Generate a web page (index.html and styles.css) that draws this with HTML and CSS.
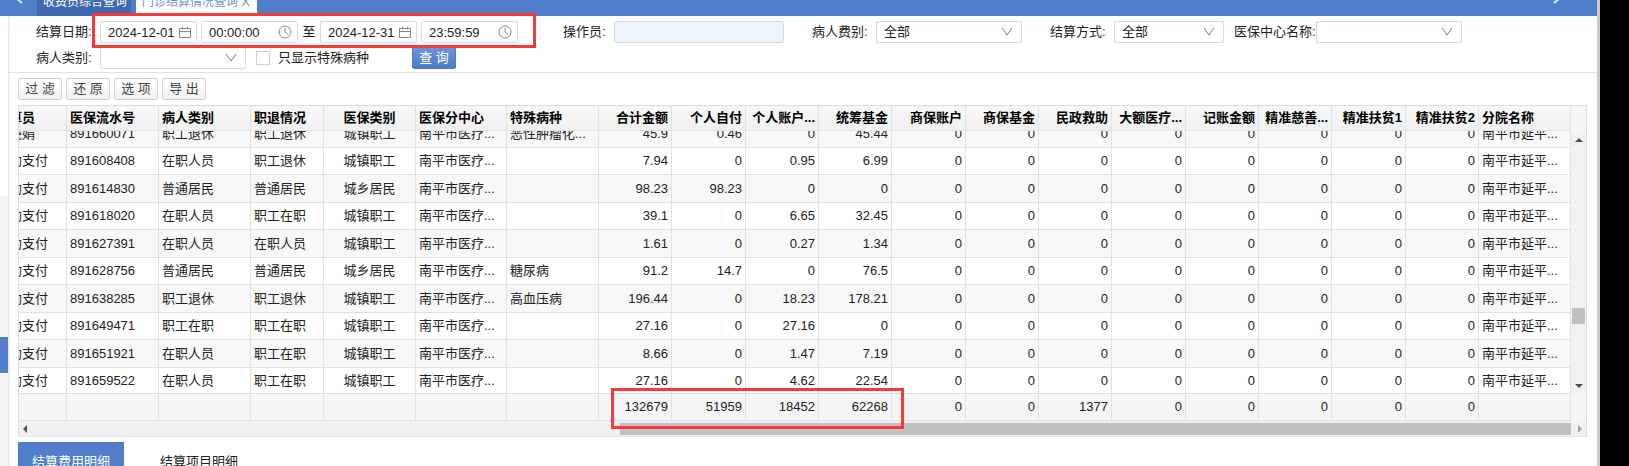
FILE: index.html
```html
<!DOCTYPE html>
<html lang="zh-CN">
<head>
    <meta charset="UTF-8">
    <title>门诊结算情况查询</title>
    <link rel="stylesheet" href="styles.css">
</head>
<body>
<svg class="defs">
    <symbol id="icon-date" viewBox="0 0 12 12"><path d="M.5 2.5h11v9H.5zM.5 5.5h11M3.5.5v3M8.5.5v3"/></symbol>
    <symbol id="icon-time" viewBox="0 0 14 14"><circle cx="7" cy="7" r="6"/><path d="M7 3v4l3 2.500"/></symbol>
    <symbol id="icon-down" viewBox="0 0 12 10"><path d="M1 1l5 7 5-7"/></symbol>
</svg>

<div class="window">
    <aside class="side"><button class="side-toggle" aria-label="展开菜单"></button></aside>

    <div class="page">
        <nav class="tabbar">
            <button class="tab-arrow" aria-label="向左"><svg viewBox="0 0 8 12"><path d="M7 1L1 6l6 5"/></svg></button>
            <a class="tab" href="#">收费员综合查询</a>
            <a class="tab active" href="#">门诊结算情况查询 <span class="close">X</span></a>
            <button class="tab-arrow tab-next" aria-label="向右"><svg viewBox="0 0 8 12"><path d="M1 1l6 5-6 5"/></svg></button>
        </nav>

        <main class="main">
            <form class="search">
                <div class="field">
                    <label for="beginDate">结算日期:</label>
                    <div class="range">
                        <span class="box"><input id="beginDate" type="text" value="2024-12-01"><svg class="icon icon-date"><use href="#icon-date"/></svg></span>
                        <span class="box"><input type="text" value="00:00:00" aria-label="开始时间"><svg class="icon"><use href="#icon-time"/></svg></span>
                        <span class="to">至</span>
                        <span class="box"><input type="text" value="2024-12-31" aria-label="结束日期"><svg class="icon icon-date"><use href="#icon-date"/></svg></span>
                        <span class="box"><input type="text" value="23:59:59" aria-label="结束时间"><svg class="icon"><use href="#icon-time"/></svg></span>
                        <div class="mark mark-date"></div>
                    </div>
                </div>
                <div class="field field-short">
                    <label for="operator">操作员:</label>
                    <span class="box box-operator"><input id="operator" type="text"></span>
                </div>
                <div class="field">
                    <label for="feeType">病人费别:</label>
                    <span class="box box-wide"><select id="feeType"><option>全部</option></select><svg class="icon icon-down"><use href="#icon-down"/></svg></span>
                </div>
                <div class="field">
                    <label for="payType">结算方式:</label>
                    <span class="box box-pay"><select id="payType"><option>全部</option></select><svg class="icon icon-down"><use href="#icon-down"/></svg></span>
                </div>
                <div class="field field-long">
                    <label for="center">医保中心名称:</label>
                    <span class="box box-wide"><select id="center"><option></option></select><svg class="icon icon-down"><use href="#icon-down"/></svg></span>
                </div>
                <div class="field field-row">
                    <label for="patientType">病人类别:</label>
                    <span class="box box-wide"><select id="patientType"><option></option></select><svg class="icon icon-down"><use href="#icon-down"/></svg></span>
                    <label class="check"><input type="checkbox">只显示特殊病种</label>
                    <button class="btn-query" type="button">查 询</button>
                </div>
            </form>

            <div class="toolbar">
                <button>过 滤</button>
                <button>还 原</button>
                <button>选 项</button>
                <button>导 出</button>
            </div>

            <div class="grid">
                <div class="grid-view" id="gridView">
                    <table>
                        <colgroup id="cols"></colgroup>
                        <thead><tr id="gridHead"></tr></thead>
                        <tbody id="gridBody"></tbody>
                        <tfoot><tr id="gridFoot"></tr></tfoot>
                    </table>
                </div>
                <div class="vscroll">
                    <div class="vtrack">
                        <i class="arrow up"></i>
                        <i class="vthumb"></i>
                        <i class="arrow down"></i>
                    </div>
                </div>
                <div class="hscroll">
                    <i class="arrow left"></i>
                    <i class="hthumb"></i>
                    <i class="arrow right"></i>
                </div>
                <div class="mark mark-total"></div>
            </div>

            <nav class="detail-tabs">
                <a class="active" href="#">结算费用明细</a>
                <a href="#">结算项目明细</a>
            </nav>
        </main>
    </div>
</div>

<script>
    // 列: 标题, 宽度, 对齐
    const columns = [
        ['结算员', 74, 'l'], ['医保流水号', 92, 'l'], ['病人类别', 92, 'l'], ['职退情况', 73, 'l'],
        ['医保类别', 92, 'c'], ['医保分中心', 91, 'l'], ['特殊病种', 92, 'l'], ['合计金额', 73, 'r'],
        ['个人自付', 74, 'r'], ['个人账户...', 73, 'r'], ['统筹基金', 73, 'r'], ['商保账户', 74, 'r'],
        ['商保基金', 73, 'r'], ['民政救助', 73, 'r'], ['大额医疗...', 74, 'r'], ['记账金额', 73, 'r'],
        ['精准慈善...', 73, 'r'], ['精准扶贫1', 74, 'r'], ['精准扶贫2', 73, 'r'], ['分院名称', 0, 'l']
    ];

    // 流水号, 病人类别, 职退情况, 医保类别, 特殊病种, 合计, 自付, 账户, 统筹
    const records = [
        ['891660071', '职工退休', '职工退休', '城镇职工', '恶性肿瘤化...', 45.9, 0.46, 0, 45.44],
        ['891608408', '在职人员', '职工退休', '城镇职工', '', 7.94, 0, 0.95, 6.99],
        ['891614830', '普通居民', '普通居民', '城乡居民', '', 98.23, 98.23, 0, 0],
        ['891618020', '在职人员', '职工在职', '城镇职工', '', 39.1, 0, 6.65, 32.45],
        ['891627391', '在职人员', '在职人员', '城镇职工', '', 1.61, 0, 0.27, 1.34],
        ['891628756', '普通居民', '普通居民', '城乡居民', '糖尿病', 91.2, 14.7, 0, 76.5],
        ['891638285', '职工退休', '职工退休', '城镇职工', '高血压病', 196.44, 0, 18.23, 178.21],
        ['891649471', '职工在职', '职工在职', '城镇职工', '', 27.16, 0, 27.16, 0],
        ['891651921', '在职人员', '职工在职', '城镇职工', '', 8.66, 0, 1.47, 7.19],
        ['891659522', '在职人员', '职工在职', '城镇职工', '', 27.16, 0, 4.62, 22.54]
    ];
    const totals = ['', '', '', '', '', '', '', 132679, 51959, 18452, 62268, 0, 0, 1377, 0, 0, 0, 0, 0, ''];

    function cells(values, tag) {
        return values.map((v, i) => `<${tag} class="${columns[i][2]}">${v}</${tag}>`).join('');
    }

    function toRow(r, i) {
        const name = i === 0 ? '陈晓娟' : '自助支付';
        return [name, r[0], r[1], r[2], r[3], '南平市医疗...', r[4], r[5], r[6], r[7], r[8],
            0, 0, 0, 0, 0, 0, 0, 0, '南平市延平...'];
    }

    document.getElementById('cols').innerHTML =
        columns.map(c => c[1] ? `<col style="width:${c[1]}px">` : '<col>').join('');
    document.getElementById('gridHead').innerHTML = cells(columns.map(c => c[0]), 'th');
    document.getElementById('gridBody').innerHTML =
        records.map((r, i) => `<tr>${cells(toRow(r, i), 'td')}</tr>`).join('');
    document.getElementById('gridFoot').innerHTML = cells(totals, 'td');

    const view = document.getElementById('gridView');
    view.scrollTop = 11;
    view.scrollLeft = 26;
</script>
</body>
</html>
```

FILE: styles.css
```css
* {
    box-sizing: border-box;
}
body {
    margin: 0;
    background: #000;
    color: #222;
    font: 13px/18px "Liberation Sans", Arial, "Noto Sans CJK SC", sans-serif;
    overflow: hidden;
}
button, input, select {
    font: inherit;
    color: inherit;
    margin: 0;
}
a {
    color: inherit;
    text-decoration: none;
}
.defs {
    display: none;
}
.window {
    display: grid;
    grid-template-columns: 8px 1fr;
    height: 100vh;
    margin-right: 29px;
    border-right: 3px solid #c8cacb;
    background: #fff;
}

/* 左侧收起的菜单 */
.side {
    background: linear-gradient(#507ecb 16px, #fff 16px, #fff 196px, #f4f4f4 196px);
    padding-top: 337px;
}
.side-toggle {
    display: block;
    width: 8px;
    height: 36px;
    padding: 0;
    border: 0;
    background: #507ecb;
}
.page {
    min-width: 0;
    display: flex;
    flex-direction: column;
}

/* 顶部标签 */
.tabbar {
    height: 16px;
    flex: none;
    display: flex;
    align-items: flex-end;
    background: #507ecb;
    overflow: hidden;
    padding-right: 36px;
}
.tab-arrow {
    width: 29px;
    height: 24px;
    padding: 0 0 12px 7px;
    border: 0;
    background: none;
    text-align: left;
}
.tab-arrow svg {
    display: block;
    width: 8px;
    height: 12px;
    fill: none;
    stroke: #d9efff;
    stroke-width: 2;
}
.tab-next {
    margin-left: auto;
    width: 8px;
    padding-left: 0;
}
.tab {
    height: 28px;
    padding: 0 4px 0 6px;
    margin-right: 5px;
    background: #3d69b3;
    color: #fff;
    font-size: 12px;
    line-height: 28px;
}
.tab.active {
    background: #fff;
    color: #6b8fcf;
    margin: 0;
    padding-right: 7px;
}
.close {
    font-size: 13px;
}

.main {
    flex: 1;
    border-left: 1px solid #e3e3e3;
}
.search {
    display: grid;
    grid-template-columns: 527px 249px 238px 184px 1fr;
    row-gap: 4px;
    padding: 5px 0 3px 27px;
    border-bottom: 1px solid #e4e4e4;
}
.field {
    display: flex;
    align-items: center;
}
.field > label:first-child {
    width: 64px;
    flex: none;
    white-space: nowrap;
}
.field-short > label:first-child {
    width: 51px;
}
.field-long > label:first-child {
    width: 82px;
}
.field-row {
    grid-column: 1 / -1;
}
.range {
    position: relative;
    display: flex;
    gap: 4px;
    align-items: center;
}
.to {
    width: 14px;
    text-align: center;
}
.box {
    display: flex;
    align-items: center;
    width: 97px;
    height: 22px;
    padding-right: 5px;
    border: 1px solid #d9d9d9;
    border-radius: 2px;
    background: #fff;
}
.box input, .box select {
    flex: 1;
    width: 0;
    height: 20px;
    padding: 0 0 0 7px;
    border: 0;
    outline: 0;
    background: none;
    appearance: none;
}
.box-wide {
    width: 146px;
}
.box-pay {
    width: 110px;
}
.box-operator {
    width: 170px;
    background: #edf4fd;
}
.icon {
    width: 14px;
    height: 14px;
    flex: none;
    fill: none;
    stroke: #888;
}
.icon-date {
    width: 12px;
    height: 12px;
}
.icon-down {
    width: 12px;
    height: 10px;
    margin-right: 3px;
    stroke: #777;
}
.check {
    display: flex;
    align-items: center;
    gap: 8px;
    margin-left: 10px;
}
.check input {
    appearance: none;
    width: 14px;
    height: 14px;
    border: 1px solid #d0d0d0;
    background: #fff;
}
.btn-query {
    width: 44px;
    height: 22px;
    margin-left: 43px;
    padding: 0;
    border: 1px solid #4f78bf;
    border-radius: 2px;
    background: linear-gradient(#6c93d8, #4f7bc8);
    color: #fff;
}

.toolbar {
    display: flex;
    gap: 4px;
    padding: 5px 9px;
}
.toolbar button {
    width: 44px;
    height: 22px;
    padding: 0;
    border: 1px solid #d0d0d0;
    border-radius: 2px;
    background: linear-gradient(#fff, #f0f0f0);
    color: #444;
}

/* 表格 */
.grid {
    position: relative;
    display: grid;
    grid-template-columns: 1fr 15px;
    margin: 0 10px 0 9px;
    border: solid #dcdcdc;
    border-width: 0 1px;
}
.grid-view {
    height: 316px;
    min-width: 0;
    overflow: hidden;
}
table {
    table-layout: fixed;
    width: calc(100% + 26px);
    border-collapse: separate;
    border-spacing: 0;
}
th, td {
    padding: 0 3px;
    border-right: 1px solid #e0e3e0;
    border-bottom: 1px solid #e0e3e0;
    text-align: left;
    white-space: nowrap;
    overflow: hidden;
}
th {
    position: sticky;
    top: 0;
    height: 26px;
    background: linear-gradient(#f8f8f8, #f0f0f0);
    border-top: 1px solid #dcdcdc;
    color: #000;
}
tbody td {
    height: 27px;
}
tbody tr:nth-child(odd) td {
    height: 28px;
    background: #f8f8f8;
}
tfoot td {
    position: sticky;
    bottom: 0;
    height: 28px;
    background: #f5f5f5;
    border-top: 1px solid #dcdcdc;
}
.c {
    text-align: center;
}
.r {
    text-align: right;
}
.vscroll {
    padding: 26px 0 28px;
    background: #f5f5f5;
    border-top: 1px solid #dcdcdc;
}
.vtrack {
    height: 100%;
    display: flex;
    flex-direction: column;
    align-items: center;
    background: #f1f1f1;
    padding: 6px 0 5px;
}
.vthumb {
    width: 13px;
    height: 16px;
    margin: auto 0 60px;
    background: #c1c1c1;
}
.hscroll {
    grid-column: 1 / -1;
    display: flex;
    align-items: center;
    height: 16px;
    padding: 0 4px;
    background: #f0f0f0;
    border-bottom: 1px solid #e4e4e4;
}
.hthumb {
    flex: 1;
    height: 12px;
    margin: 0 7px 0 auto;
    max-width: 61%;
    background: #c1c1c1;
}
.arrow {
    border: 4px solid transparent;
}
.arrow.up {
    border-top: 0;
    border-bottom-color: #505050;
}
.arrow.down {
    border-bottom: 0;
    border-top-color: #505050;
}
.arrow.left {
    border-left: 0;
    border-right-color: #505050;
}
.arrow.right {
    border-right: 0;
    border-left-color: #a0a0a0;
}

/* 红框标注 */
.mark {
    position: absolute;
    border: 3px solid #f93838;
    pointer-events: none;
}
.mark-date {
    inset: -8px -18px -5px -8px;
}
.mark-total {
    left: 592px;
    bottom: 8px;
    width: 293px;
    height: 41px;
}

.detail-tabs {
    display: flex;
    margin: 5px 9px 0;
}
.detail-tabs a {
    width: 106px;
    flex: none;
    height: 38px;
    margin-right: 22px;
    line-height: 40px;
    text-align: center;
}
.detail-tabs .active {
    background: #507ecb;
    color: #fff;
}
```
